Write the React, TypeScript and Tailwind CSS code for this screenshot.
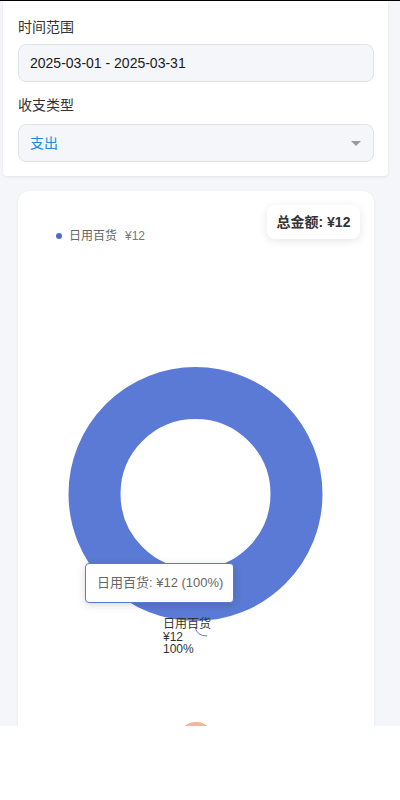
import React from "react";

const font = { fontFamily: '"Liberation Sans", "Noto Sans CJK SC", sans-serif' };

export default function App() {
  return (
    <div className="relative h-[726px] overflow-hidden bg-[#f5f6fa]" style={font}>
      <div className="h-px bg-black" />
      <div className="ml-[3px] w-[385px] rounded-b-[4px] bg-white pb-[14px] pl-[15px] pr-[14px] pt-[15px] shadow-[0_1px_3px_rgba(0,0,0,0.08)]">
        <div className="text-[14px] leading-[22px] text-[#333]">时间范围</div>
        <div className="mt-[6px] flex h-[38px] items-center rounded-[8px] border border-[#e1e2e8] bg-[#f5f6fa] px-[11px] text-[14px] text-[#1a1a1a]">
          2025-03-01 - 2025-03-31
        </div>
        <div className="mt-[12px] text-[14px] leading-[22px] text-[#333]">收支类型</div>
        <div className="mt-[8px] flex h-[38px] items-center justify-between rounded-[8px] border border-[#e1e2e8] bg-[#f5f6fa] pl-[11px] pr-[12px] text-[14px] text-[#1e88e5]">
          <span>支出</span>
          <span className="h-0 w-0 border-l-[5px] border-r-[5px] border-t-[5px] border-l-transparent border-r-transparent border-t-[#9a9a9a]" />
        </div>
      </div>

      <div className="relative ml-[18px] mt-[15px] h-[560px] w-[356px] overflow-hidden rounded-[12px] bg-white shadow-[0_1px_4px_rgba(0,0,0,0.05)]">
        <div className="absolute left-[38px] top-[36px] flex items-center text-[12px] text-[#666]">
          <span className="mr-[7px] h-[6px] w-[6px] rounded-full bg-[#4e6bc6]" />
          <span>日用百货</span>
          <span className="ml-[8px] text-[#777]">¥12</span>
        </div>
        <div className="absolute left-[249px] top-[14px] flex h-[34px] w-[93px] items-center justify-center rounded-[8px] bg-white text-[14px] font-bold text-[#333] shadow-[0_2px_10px_rgba(0,0,0,0.1)]">
          总金额: ¥12
        </div>
        <svg className="absolute left-0 top-0" width="356" height="560" viewBox="0 0 356 560">
          <circle cx="177.5" cy="303" r="101" fill="none" stroke="#5a7ad5" strokeWidth="52" />
          <path d="M177 436 Q179 445 189 445" fill="none" stroke="#5a7ad5" strokeWidth="1" />
        </svg>
        <div className="absolute left-[67px] top-[372px] flex h-[40px] w-[149px] items-center whitespace-nowrap rounded-[4px] border border-[#5a7ad5] bg-white pl-[11px] text-[13px] text-[#666] shadow-[0_2px_8px_rgba(0,0,0,0.15)]">
          日用百货: ¥12 (100%)
        </div>
        <div className="absolute left-[145px] top-[427px] text-[12px] leading-[12.5px] text-[#333]">
          <div>日用百货</div>
          <div>¥12</div>
          <div>100%</div>
        </div>
        <div className="absolute left-[160px] top-[531px] h-[36px] w-[36px] rounded-full bg-[#f4b497]" />
      </div>
    </div>
  );
}
